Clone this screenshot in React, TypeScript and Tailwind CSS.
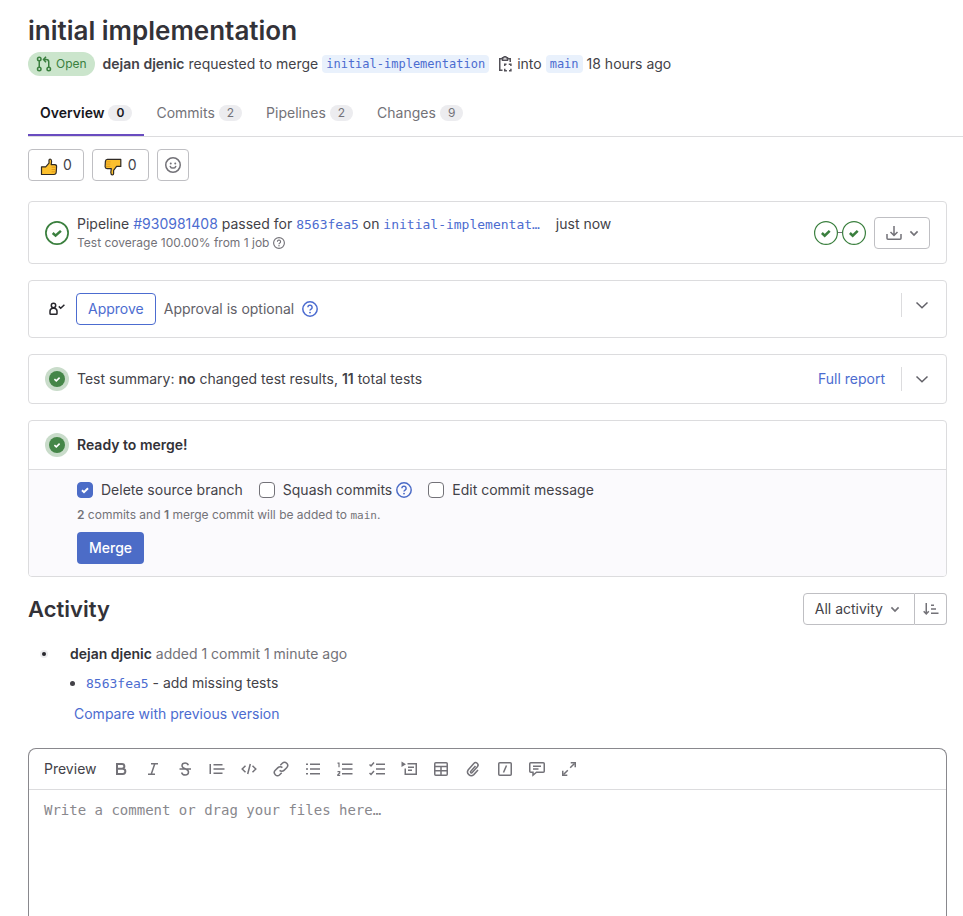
import type { ReactNode } from "react";

const mono = "font-['DejaVu_Sans_Mono',monospace]";

type IconProps = { size?: number; className?: string; sw?: number; children: ReactNode };

function Icon({ size = 16, className = "", sw = 1.5, children }: IconProps) {
  return (
    <svg
      width={size}
      height={size}
      viewBox="0 0 16 16"
      fill="none"
      stroke="currentColor"
      strokeWidth={sw}
      className={`shrink-0 ${className}`}
      aria-hidden="true"
    >
      {children}
    </svg>
  );
}

function MergeRequestIcon() {
  return (
    <Icon size={16}>
      <circle cx="3.25" cy="3" r="1.75" />
      <circle cx="3.25" cy="13" r="1.75" />
      <circle cx="12.75" cy="13" r="1.75" />
      <path d="M3.25 4.75v6.5M12.75 11.25V6a2.5 2.5 0 0 0-2.5-2.5H8M10 .8 7.5 3.5 10 6.2" />
    </Icon>
  );
}

function CopyIcon() {
  return (
    <Icon>
      <path d="M5.500 2.750H2.750v11.500H5.500M11 2.750h2.250V6M5.500 4.250v-2.500h1.250a1.250 1.250 0 0 1 2.500 0h1.250v2.500z" />
      <path d="M7.750 10V8.250H9.500M11.750 8.250H13.900V10M13.900 12.800v1.950H12M9.900 14.750H7.750V12.800" />
    </Icon>
  );
}

function SmileyIcon() {
  return (
    <Icon>
      <circle cx="8" cy="8" r="7.25" />
      <path d="M5.300 9.400a2.800 2.300 0 0 0 5.400 0" strokeLinecap="round" />
      <circle cx="5.750" cy="6.500" r="1" fill="currentColor" stroke="none" />
      <circle cx="10.250" cy="6.500" r="1" fill="currentColor" stroke="none" />
    </Icon>
  );
}

function QuestionIcon({ size = 16 }: { size?: number }) {
  return (
    <Icon size={size}>
      <circle cx="8" cy="8" r="7.2" />
      <path d="M5.9 6.3a2.1 2.1 0 1 1 3.2 1.75C8.4 8.5 8 8.8 8 9.6" />
      <circle cx="8" cy="11.6" r=".95" fill="currentColor" stroke="none" />
    </Icon>
  );
}

function ChevronIcon({ size = 16 }: { size?: number }) {
  return (
    <Icon size={size}>
      <path d="m2.5 5.5 5.5 5.3 5.5-5.3" />
    </Icon>
  );
}

function SmallChevronIcon() {
  return (
    <Icon>
      <path d="M4.400 6.400 8 10l3.600-3.600" strokeWidth="1.700" />
    </Icon>
  );
}

function StatusCircle() {
  return (
    <svg width="24" height="24" viewBox="0 0 24 24" fill="none" className="shrink-0 text-[#3a7f3e]" aria-hidden="true">
      <circle cx="12" cy="12" r="11.4" stroke="currentColor" strokeWidth="1.2" />
      <path d="m7.900 12 2.800 2.600 5-4.700" stroke="currentColor" strokeWidth="2.600" />
    </svg>
  );
}

function PipelineStatus() {
  return (
    <svg width="24" height="24" viewBox="0 0 24 24" fill="none" className="shrink-0 text-[#3a7f3e]" aria-hidden="true">
      <circle cx="12" cy="12" r="11.1" stroke="currentColor" strokeWidth="1.7" />
      <path d="m7.700 12 2.900 2.600 5.300-4.700" stroke="currentColor" strokeWidth="2.600" />
    </svg>
  );
}

function SuccessDot() {
  return (
    <svg width="24" height="24" viewBox="0 0 24 24" fill="none" className="shrink-0" aria-hidden="true">
      <circle cx="12" cy="12" r="12" fill="#c9dcca" />
      <circle cx="12" cy="12" r="8" fill="#458648" />
      <path d="m9.4 12.1 1.9 1.7 3.3-3.2" stroke="#fff" strokeWidth="1.6" />
    </svg>
  );
}

function ThumbUp() {
  return (
    <svg width="18" height="18" viewBox="0 0 18 18" className="mt-1 shrink-0" aria-hidden="true">
      <path
        d="M1.500 8.800h4.200L9 5.200V2.200Q9 1 10.200 1q1.400.2 1.400 2.500l-.4 3.100h3.600q2 .3 1.800 2l-.4 5.700q-.2 2.200-2.200 2.200H1.500z"
        fill="#fcc02e"
        stroke="#2f2a25"
        strokeWidth="1.200"
        strokeLinejoin="round"
      />
      <path d="M11.600 9.200h4.200M11.600 11.500h4M11.600 13.800h3.800" stroke="#e09a1c" strokeWidth="1" />
    </svg>
  );
}

function ThumbDown() {
  return (
    <svg width="18" height="18" viewBox="0 0 18 18" className="mt-1 shrink-0" aria-hidden="true">
      <path
        d="M16.800 1.400v7h-4.200l-3 4v3.200q0 1.400-1.200 1.400-1.600-.2-1.600-2.500l.5-3.900H3.100Q1.200 10.400 1.100 8.700l.3-5.300q.2-2 2-2z"
        fill="#fcc02e"
        stroke="#2f2a25"
        strokeWidth="1.200"
        strokeLinejoin="round"
      />
      <path d="M2 3.900h4.500M2 6.100h4.300M2 8.300h4.300" stroke="#e09a1c" strokeWidth="1" />
    </svg>
  );
}

function Branch({ children }: { children: ReactNode }) {
  return (
    <a href="#" className={`rounded bg-[#e9f1fc] px-1 py-px text-xs leading-4 text-[#4c6cd0] ${mono}`}>
      {children}
    </a>
  );
}

const tabs = [
  { label: "Overview", count: 0, active: true },
  { label: "Commits", count: 2, active: false },
  { label: "Pipelines", count: 2, active: false },
  { label: "Changes", count: 9, active: false },
];

const tools: { label: string; icon: ReactNode }[] = [
  {
    label: "Bold",
    icon: <path strokeWidth="2" d="M4 3h5a2.300 2.300 0 0 1 0 4.700H4zM4 7.700h5.700a2.600 2.600 0 0 1 0 5.300H4z" />,
  },
  { label: "Italic", icon: <path d="M6 2.750h7M3 13.250h7M9.700 3 6.300 13" /> },
  {
    label: "Strikethrough",
    icon: (
      <path d="M2.500 8h11.500M11.300 4.300C10.800 2.700 9.700 2 8.200 2 6.300 2 5 3 5 4.700 5 8.300 11.500 7.200 11.500 11c0 1.800-1.300 3-3.300 3C6.300 14 5 13.100 4.600 11.500" />
    ),
  },
  { label: "Quote", icon: <path d="M1.250 3v10M4.500 3.750h9M4.500 8h11M4.500 12.250h9" /> },
  { label: "Code", icon: <path d="m4.500 4.700-3.300 3.300 3.300 3.300M11.500 4.700l3.300 3.300-3.300 3.300M9.300 3 6.700 13" /> },
  {
    label: "Link",
    icon: (
      <path d="m7.300 4.300 2-2a3.100 3.100 0 0 1 4.400 4.400L11 9.400a3.100 3.100 0 0 1-4.400 0M8.700 11.700l-2 2a3.100 3.100 0 0 1-4.400-4.400L5 6.600a3.100 3.100 0 0 1 4.400 0" />
    ),
  },
  { label: "Bullet list", icon: <path d="M1 3.250h2M1 8h2M1 12.750h2M5 3.250h10M5 8h10M5 12.750h10" /> },
  {
    label: "Numbered list",
    icon: (
      <>
        <path d="M5 3.250h10.500M5 8h10.500M5 12.750h10.500" />
        <path strokeWidth="1.200" d="M.5 2.200h1.500v4M.5 10.700h2.200v1.200L.8 13.800v.6h2.400" />
      </>
    ),
  },
  {
    label: "Task list",
    icon: <path d="M7 3.250h9M7 8h9M7 12.750h9M.500 3.500 2 5l3-3.500M.500 12 2 13.500l3-3.500" />,
  },
  {
    label: "Collapsible section",
    icon: (
      <>
        <path d="M6.500 2.750h8.750v10.500H4.250V7.500M7 6.250h6M7 9.250h4" />
        <path d="M.5.5v5.500l4.500-2.750z" fill="currentColor" stroke="none" />
      </>
    ),
  },
  {
    label: "Table",
    icon: (
      <>
        <rect x="1.750" y="1.750" width="12.500" height="12.500" rx="1" />
        <path d="M1.750 5.500h12.500M1.750 9.750h12.500M8 5.500v8.750" />
      </>
    ),
  },
  {
    label: "Attach a file",
    icon: (
      <path d="m10.500 5-4.700 5.300a.9.9 0 0 0 1.400 1.300l5.200-5.900a2.400 2.400 0 0 0-3.600-3.200L3.300 8.700a3.700 3.700 0 0 0 5.500 4.900L13 9" />
    ),
  },
  {
    label: "Quick action",
    icon: (
      <>
        <rect x="1.750" y="1.750" width="12.500" height="12.500" rx="1" />
        <path d="M9.500 4.500 6.500 11.500" />
      </>
    ),
  },
  {
    label: "Insert comment template",
    icon: (
      <path d="M1.750 1.750h12.500q1 0 1 1v7.500q0 1-1 1H7.500L4 14.200v-2.950H1.750q-1 0-1-1v-7.500q0-1 1-1zM4 5.250h8M4 8h5.500" />
    ),
  },
  {
    label: "Full screen",
    icon: (
      <>
        <path d="M9.200 6.800 13.500 2.500M6.800 9.200 2.500 13.500" />
        <path d="M9.700 1.800h4.550v4.500M6.300 14.250H1.750V9.700" />
      </>
    ),
  },
];

function Checkbox({ id, label, checked }: { id: string; label: string; checked?: boolean }) {
  return (
    <span className="flex items-center gap-2">
      <span className="relative flex h-4 w-4">
        <input
          id={id}
          type="checkbox"
          defaultChecked={checked}
          className="peer h-4 w-4 appearance-none rounded border border-[#737278] bg-white checked:border-[#4c6cc7] checked:bg-[#4c6cc7]"
        />
        <svg
          viewBox="0 0 16 16"
          fill="none"
          className="pointer-events-none absolute inset-0 hidden h-4 w-4 peer-checked:block"
          aria-hidden="true"
        >
          <path d="m5 8.200 2 1.900L11 6.200" stroke="#fff" strokeWidth="2" />
        </svg>
      </span>
      <label htmlFor={id}>{label}</label>
    </span>
  );
}

const card = "rounded border border-[#dcdcde] bg-white";
const link = "text-[#4c6cd0]";

export default function App() {
  return (
    <main className="flex min-h-screen flex-col bg-white pr-4 pl-7 font-['Inter',sans-serif] text-sm leading-5 text-[#434248]">
      <h1 className="mt-3 text-[26px] leading-[38px] font-semibold text-[#333238]">initial implementation</h1>

      <div className="mt-0.5 flex h-6 items-center">
        <span className="mr-2 flex h-6 items-center gap-1 rounded-full bg-[#cbe5cc] px-2 text-xs text-[#3a7f3e]">
          <MergeRequestIcon />
          Open
        </span>
        <p className="flex items-center gap-1">
          <a href="#" className="font-semibold">dejan djenic</a>
          requested to merge
          <Branch>initial-implementation</Branch>
          <button type="button" aria-label="Copy branch name" className="ml-1 text-[#535158]">
            <CopyIcon />
          </button>
          into
          <Branch>main</Branch>
          <time>18 hours ago</time>
        </p>
      </div>

      <nav className="-mr-4 mt-3 flex border-b border-[#dcdcde]">
        {tabs.map((t) => (
          <a
            key={t.label}
            href="#"
            className={
              t.active
                ? "flex h-12 items-center gap-1 border-b-2 border-[#694cc0] px-3 pt-[3px] font-semibold text-[#18171d]"
                : "flex h-12 items-center gap-1 border-b-2 border-transparent px-3 pt-[3px] text-[#737278]"
            }
          >
            {t.label}
            <span className="rounded-full bg-[#ececef] px-2 text-xs leading-4">{t.count}</span>
          </a>
        ))}
      </nav>

      <div className="mt-3 flex gap-2">
        <button type="button" aria-label="Thumbs up" className="flex h-8 items-center gap-[5px] rounded border border-[#bfbfc3] px-[11px]">
          <ThumbUp />
          <span>0</span>
        </button>
        <button type="button" aria-label="Thumbs down" className="flex h-8 items-center gap-1.5 rounded border border-[#bfbfc3] px-[11px]">
          <ThumbDown />
          <span>0</span>
        </button>
        <button type="button" aria-label="Add reaction" className="flex h-8 w-8 items-center justify-center rounded border border-[#bfbfc3] text-[#737278]">
          <SmileyIcon />
        </button>
      </div>

      <section className={`mt-5 flex items-center gap-2 px-4 py-3 ${card}`}>
        <PipelineStatus />
        <div className="min-w-0 grow">
          <p className="truncate">
            Pipeline <a href="#" className={link}>#930981408</a> passed for{" "}
            <a href="#" className={`text-[13px] ${link} ${mono}`}>8563fea5</a> on{" "}
            <a href="#" className={`mr-3 text-[13px] ${link} ${mono}`}>initial-implementat…</a> just now
          </p>
          <p className="flex items-center gap-1 text-xs leading-4 text-[#737278]">
            Test coverage 100.00% from 1 job
            <QuestionIcon size={12} />
          </p>
        </div>
        <div className="flex items-center">
          <StatusCircle />
          <span className="h-px w-1 bg-[#737278]" />
          <StatusCircle />
        </div>
        <button type="button" aria-label="Download artifacts" className="flex h-8 items-center gap-1 rounded border border-[#bfbfc3] pr-[7px] pl-[11px] text-[#737278]">
          <Icon>
            <path d="M8 1v9.500M4.500 7 8 10.500 11.500 7M1 9v4.250q0 1 1 1h12q1 0 1-1V9" />
          </Icon>
          <SmallChevronIcon />
        </button>
      </section>

      <section className={`mt-4 flex items-start px-4 py-3 ${card}`}>
        <div className="flex grow items-center gap-2">
          <span className="flex w-[23px] justify-center text-[#28272d]">
            <Icon>
              <circle cx="4.500" cy="4.500" r="2.200" />
              <path d="M3.700 7.200h1.600q2.700.5 2.700 3v2.300q0 .8-.8.8H1.800q-.8 0-.8-.8v-2.300q0-2.500 2.700-3zM9.800 5.400l1.900 1.800 3.700-3.500" />
            </Icon>
          </span>
          <button type="button" className="h-8 rounded border border-[#4c6cd0] px-[11px] text-[#4c6cd0]">
            Approve
          </button>
          <span className="text-[#626168]">Approval is optional</span>
          <span className="text-[#4c6cd0]"><QuestionIcon /></span>
        </div>
        <div className="flex h-6 w-[29px] items-center justify-end border-l border-[#dcdcde] text-[#626168]">
          <button type="button" aria-label="Show approvals"><ChevronIcon /></button>
        </div>
      </section>

      <section className={`mt-4 flex items-center px-4 py-3 ${card}`}>
        <SuccessDot />
        <p className="ml-2 grow">
          Test summary: <strong className="font-semibold">no</strong> changed test results,{" "}
          <strong className="font-semibold">11</strong> total tests
        </p>
        <a href="#" className={`mr-4 ${link}`}>Full report</a>
        <div className="flex h-6 w-[29px] items-center justify-end border-l border-[#dcdcde] text-[#626168]">
          <button type="button" aria-label="Show test summary"><ChevronIcon /></button>
        </div>
      </section>

      <section className={`mt-4 overflow-hidden ${card}`}>
        <div className="flex items-center gap-2 px-4 py-3">
          <SuccessDot />
          <h2 className="font-semibold text-[#333238]">Ready to merge!</h2>
        </div>
        <div className="border-t border-[#dcdcde] bg-[#fbfafd] py-3 pr-4 pl-12">
          <div className="flex h-4 items-center gap-4">
            <Checkbox id="delete-branch" label="Delete source branch" checked />
            <span className="flex items-center gap-1">
              <Checkbox id="squash" label="Squash commits" />
              <span className="text-[#4c6cc7]"><QuestionIcon /></span>
            </span>
            <Checkbox id="edit-message" label="Edit commit message" />
          </div>
          <p className="mt-[9px] text-xs leading-4 text-[#737278]">
            <strong className="font-semibold">2</strong> commits and <strong className="font-semibold">1</strong> merge
            commit will be added to <span className={`text-[11px] ${mono}`}>main</span>.
          </p>
          <button type="button" className="mt-2 h-8 rounded bg-[#4c6cc7] px-3 font-medium text-white">
            Merge
          </button>
        </div>
      </section>

      <header className="mt-4 flex items-center justify-between">
        <h2 className="text-[22px] leading-8 font-semibold text-[#333238]">Activity</h2>
        <div className="flex">
          <button type="button" className="flex h-8 items-center gap-1 rounded-l border border-[#bfbfc3] px-[11px]">
            All activity
            <span className="text-[#737278]"><SmallChevronIcon /></span>
          </button>
          <button type="button" aria-label="Sort direction" className="flex h-8 w-8 items-center justify-center rounded-r border border-l-0 border-[#bfbfc3] text-[#737278]">
            <Icon>
              <path d="M3.250 2v11M.700 10.300l2.550 2.700 2.550-2.700M8 4.250h3M8 8h5M8 12.250h7.500" />
            </Icon>
          </button>
        </div>
      </header>

      <div className="mt-[19px] flex">
        <span className="mt-1.5 ml-3 flex h-2 w-2 items-center justify-center rounded-full bg-[#ececef]">
          <span className="h-1 w-1 rounded-full bg-[#28272d]" />
        </span>
        <div className="ml-[22px]">
          <p className="text-[#737278]">
            <a href="#" className="font-semibold text-[#333238]">dejan djenic</a> added 1 commit 1 minute ago
          </p>
          <ul className="mt-[9px] list-disc pl-4">
            <li>
              <a href="#" className={`text-[13px] ${link} ${mono}`}>8563fea5</a> - add missing tests
            </li>
          </ul>
          <a href="#" className={`mt-[10px] ml-1 block ${link}`}>Compare with previous version</a>
        </div>
      </div>

      <form className="mt-6 flex grow flex-col rounded-t-lg border border-b-0 border-[#89888d]">
        <div className="flex h-[41px] items-center gap-4 border-b border-[#dcdcde] px-[15px] text-[#737278]">
          <button type="button" className="text-[#434248]">Preview</button>
          {tools.map((t) => (
            <button key={t.label} type="button" aria-label={t.label}>
              <Icon>{t.icon}</Icon>
            </button>
          ))}
        </div>
        <textarea
          aria-label="Comment"
          placeholder="Write a comment or drag your files here…"
          className={`grow resize-none px-[15px] py-[10px] outline-none placeholder:text-[#89888d] ${mono}`}
        />
      </form>
    </main>
  );
}
